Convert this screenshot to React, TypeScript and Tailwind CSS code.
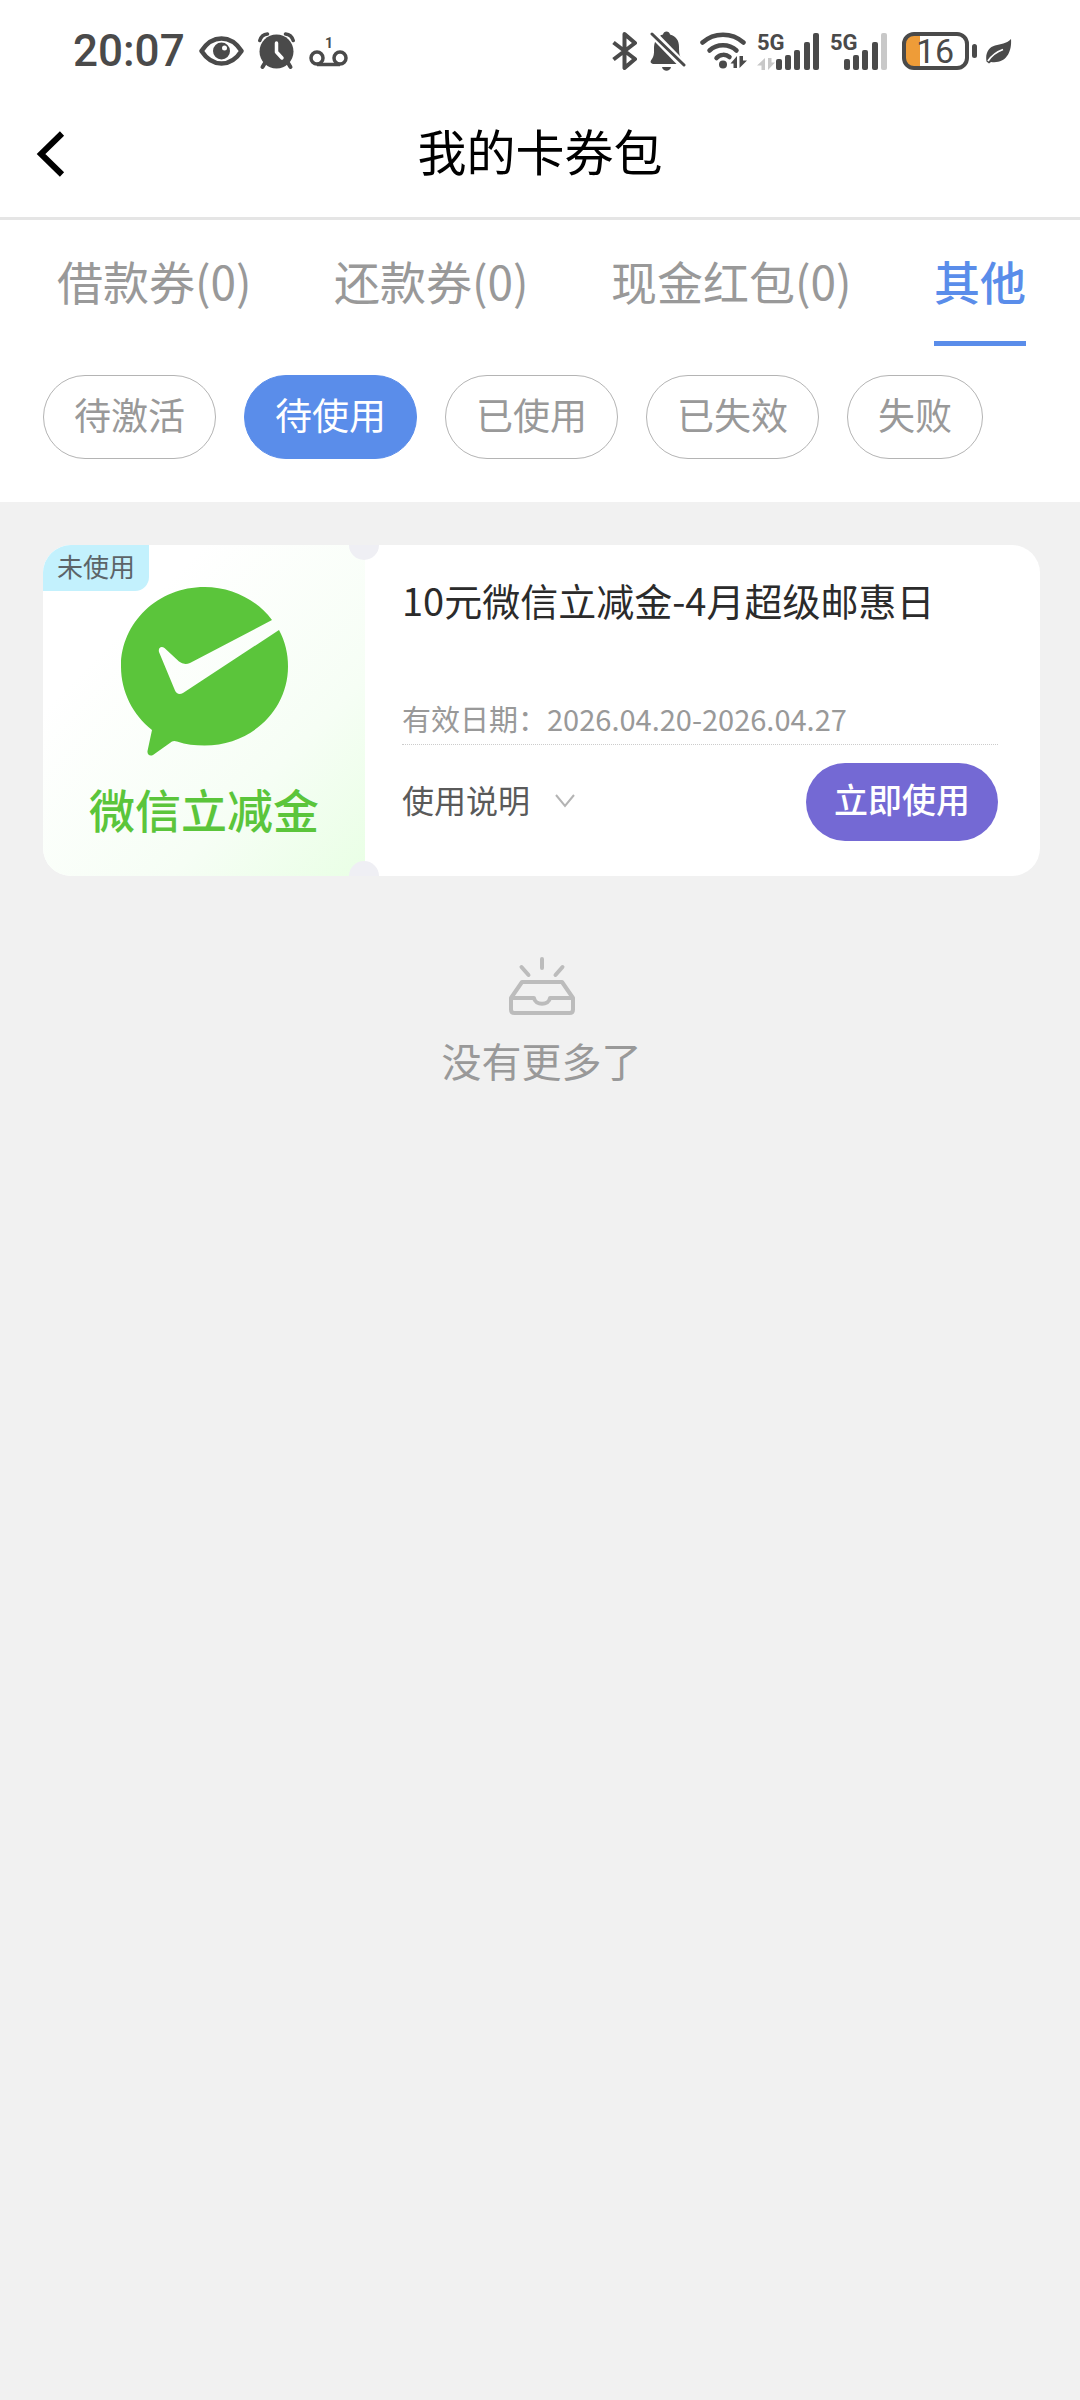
import React, { useState } from "react";

const INK = "#4a4a4a";

function EyeIcon() {
  return (
    <svg width="45" height="30" viewBox="0 0 45 30" aria-hidden="true">
      <path d="M2.500 15C8 6.500 14.500 2.500 22.500 2.500S37 6.500 42.500 15C37 23.500 30.500 27.500 22.500 27.500S8 23.500 2.500 15Z" fill="none" stroke={INK} strokeWidth="4.500" strokeLinejoin="round" />
      <circle cx="22.500" cy="15" r="8.500" fill={INK} />
      <circle cx="25.500" cy="12" r="2.500" fill="#fff" />
    </svg>
  );
}

function AlarmIcon() {
  return (
    <svg width="37" height="38" viewBox="0 0 37 38" aria-hidden="true">
      <g stroke={INK} strokeLinecap="round" fill="none">
        <path d="M1.800 8.500A9 9 0 0 1 9.500 2M35.200 8.500A9 9 0 0 0 27.500 2" strokeWidth="3.500" />
        <path d="M7.500 30L4.500 35M29.500 30L32.500 35" strokeWidth="4" />
      </g>
      <circle cx="18.500" cy="19.500" r="17" fill={INK} />
      <path d="M18.500 11V20L24 26" fill="none" stroke="#fff" strokeWidth="3.500" strokeLinecap="round" strokeLinejoin="round" />
    </svg>
  );
}

function VoicemailIcon() {
  return (
    <svg width="39" height="34" viewBox="0 0 39 34" aria-hidden="true">
      <g fill="none" stroke={INK} strokeWidth="3.500">
        <circle cx="8" cy="24" r="6" />
        <circle cx="31" cy="24" r="6" />
        <path d="M8 30.500H31" />
      </g>
      <text x="20" y="14" textAnchor="middle" fill={INK} fontSize="14" fontWeight="700" fontFamily="Roboto, sans-serif">1</text>
    </svg>
  );
}

function BluetoothIcon() {
  return (
    <svg width="26" height="38" viewBox="0 0 26 38" aria-hidden="true">
      <path d="M1.500 10.500L23 27L12.500 36V2L23 11L1.500 27.500" fill="none" stroke={INK} strokeWidth="4" strokeLinejoin="round" />
    </svg>
  );
}

function MutedBellIcon() {
  return (
    <svg width="36" height="40" viewBox="0 0 36 40" aria-hidden="true">
      <path d="M3 33C0 32 0 30.500 2 28C4.500 25 4 20 4 16C4.500 9 8.500 4.500 13 3.500C13.500 -0.500 19.500 -0.500 20 3.500C26 5 29 9.500 29 16C29 22 29.500 25 31.500 28C33 30.500 32 33 30 33Z" fill={INK} />
      <path d="M12 36H21C20 41 13 41 12 36Z" fill={INK} />
      <path d="M0 0L34 35" stroke="#fff" strokeWidth="8" />
      <path d="M2 3L34 34" stroke={INK} strokeWidth="3" strokeLinecap="round" />
    </svg>
  );
}

function WifiIcon() {
  return (
    <svg width="47" height="38" viewBox="0 0 47 38" aria-hidden="true">
      <g fill="none" stroke={INK} strokeWidth="4.500" strokeLinecap="round">
        <path d="M2.500 10.500C14 0 32 0 43.500 10.500" />
        <path d="M9.500 18.500C17 11.500 29 11.500 36.500 18.500" />
        <path d="M16.500 26C20 22 26 22 29.500 25" />
      </g>
      <circle cx="23" cy="32.500" r="4" fill={INK} />
      <path d="M37 24V36H33.500V31.500H30.500ZM39.500 24V36L47 28.500H43V24Z" fill={INK} />
    </svg>
  );
}

function SignalIcon({ labelX, weakLast, idle }: { labelX: number; weakLast?: boolean; idle?: boolean }) {
  const bars = [
    [19, 27],
    [28, 23],
    [37, 18],
    [47, 10],
    [56, 1],
  ];
  return (
    <svg width="63" height="55" viewBox="0 -8 63 55" aria-hidden="true">
      <text x={labelX} y="18" fill={INK} fontSize="22" fontWeight="700" fontFamily="Roboto, sans-serif">5G</text>
      {idle && <path d="M8 26V38H4.500V33.500H0ZM11 26V38L18 30.500H14.500V26Z" fill="#c8c8c8" />}
      {bars.map(([x, y], i) => (
        <rect key={x} x={x} y={y} width="6" height={38 - y} rx="2" fill={weakLast && i === 4 ? "#c8c8c8" : INK} />
      ))}
    </svg>
  );
}

function BatteryIcon() {
  return (
    <svg width="76" height="38" viewBox="0 0 76 38" aria-label="16%">
      <path d="M18 3H11A8 8 0 0 0 3 11V27A8 8 0 0 0 11 35H18Z" fill="#ee9c38" />
      <rect x="2" y="2" width="63" height="34" rx="10" fill="none" stroke={INK} strokeWidth="4" />
      <rect x="70" y="12" width="5" height="14" rx="2.500" fill={INK} />
      <text x="33" y="31" textAnchor="middle" fill={INK} fontSize="34" fontFamily="Roboto, sans-serif">16</text>
    </svg>
  );
}

function LeafIcon() {
  return (
    <svg width="26" height="25" viewBox="0 0 26 25" aria-hidden="true">
      <path d="M25 0C26 13 20 25 5 23L3 24.500L0.500 22.500C-1 14 3 8 9 6.500C15 5 20 5 25 0Z" fill={INK} />
      <path d="M2 22C6 16 10 13 17 10.500" fill="none" stroke="#fff" strokeWidth="1.800" />
    </svg>
  );
}

function StatusBar() {
  return (
    <div className="flex h-[102px] items-center justify-between bg-white pr-[68px] pl-[73px]">
      <div className="flex items-center">
        <span className="font-[Roboto,sans-serif] text-[44px] leading-[50px] font-medium text-[#4a4a4a]">20:07</span>
        <div className="ml-[14px] flex items-center gap-[14px]">
          <EyeIcon />
          <AlarmIcon />
          <VoicemailIcon />
        </div>
      </div>
      <div className="flex items-center">
        <BluetoothIcon />
        <div className="ml-3 flex items-center gap-[14px]">
          <MutedBellIcon />
          <WifiIcon />
        </div>
        <div className="ml-[10px] flex items-center gap-[5px]">
          <SignalIcon labelX={0} idle />
          <SignalIcon labelX={5} weakLast />
        </div>
        <div className="ml-[14px] flex items-center gap-2">
          <BatteryIcon />
          <LeafIcon />
        </div>
      </div>
    </div>
  );
}

function Header() {
  return (
    <header className="grid h-[118px] grid-cols-[1fr_auto_1fr] items-center border-b-[3px] border-[#e5e5e5] bg-white px-[36px] pb-[15px]">
      <button type="button" aria-label="返回" className="justify-self-start pt-1">
        <svg width="30" height="46" viewBox="0 0 30 46" aria-hidden="true">
          <path d="M26 2.500L5 23L26 43.500" fill="none" stroke="#000" strokeWidth="6" />
        </svg>
      </button>
      <h1 className="pb-1 text-[49px] leading-[60px] text-black">我的卡券包</h1>
    </header>
  );
}

const TABS = ["借款券(0)", "还款券(0)", "现金红包(0)", "其他"];
const FILTERS = ["待激活", "待使用", "已使用", "已失效", "失败"];

function Filters() {
  const [tab, setTab] = useState("其他");
  const [filter, setFilter] = useState("待使用");
  return (
    <section className="bg-white pt-[30px] pb-[43px]">
      <nav className="flex justify-between pr-[54px] pl-[57px] text-[46px] leading-[60px]">
        {TABS.map((t) => (
          <button
            key={t}
            type="button"
            onClick={() => setTab(t)}
            className={
              t === tab
                ? "border-b-[5px] border-[#5a8dea] pb-[31px] font-medium whitespace-nowrap text-[#5a8dea]"
                : "border-b-[5px] border-transparent pb-[31px] whitespace-nowrap text-[#999]"
            }
          >
            {t}
          </button>
        ))}
      </nav>
      <div className="mt-[29px] flex gap-[28px] px-[43px] text-[37px] leading-[50px]">
        {FILTERS.map((f) => (
          <button
            key={f}
            type="button"
            onClick={() => setFilter(f)}
            className={
              f === filter
                ? "h-[84px] rounded-full border border-[#5a8dea] bg-[#5a8dea] px-[30px] pb-[6px] whitespace-nowrap text-white"
                : "h-[84px] rounded-full border border-[#b4b4b4] px-[30px] pb-[6px] whitespace-nowrap text-[#999]"
            }
          >
            {f}
          </button>
        ))}
      </div>
    </section>
  );
}

function WeChatPayLogo() {
  return (
    <svg width="167" height="169" viewBox="0 0 167 169" aria-hidden="true">
      <path
        d="M151 33C136 13 111 0 83.500 0C37 0 0 35.500 0 79.500C0 105 12 128 31 143L26.500 164C26 168 29 169.500 32 168L51 154.500Q53 153.500 56 154.500C65 157.500 74 158.500 83.500 158.500C130 158.500 167 123.500 167 79.500C167 66.500 164 54 158 43L62 106C58.500 108 55.500 107 54 103.500L38 65C37 61 40 58.500 43.500 61L58 74.500Q63 78.500 69 76Z"
        fill="#5bc53b"
      />
    </svg>
  );
}

function CouponCard() {
  const [open, setOpen] = useState(false);
  return (
    <article className="relative flex min-h-[331px] overflow-hidden rounded-[28px] bg-white">
      <div className="relative flex w-[322px] shrink-0 flex-col items-center rounded-r-[14px] bg-linear-to-br from-white from-25% via-[#f6fef5] via-70% to-[#e9ffe5] pt-[42px]">
        <span className="absolute top-0 left-0 h-[46px] rounded-br-[14px] bg-[#c3f1fd] px-[14px] text-[26px] leading-[42px] text-[#5c6468]">未使用</span>
        <WeChatPayLogo />
        <p className="mt-[24px] text-[46px] leading-[56px] font-medium text-[#5bc53b]">微信立减金</p>
      </div>
      <span className="absolute -top-[15px] left-[306px] size-[30px] rounded-full bg-[#efeff4]" />
      <span className="absolute -bottom-[15px] left-[306px] size-[30px] rounded-full bg-[#efeff4]" />
      <div className="flex min-w-0 flex-1 flex-col pt-[30px] pr-[42px] pb-[35px] pl-[37px]">
        <h2 className="text-[38px] leading-[50px] whitespace-nowrap text-[#2b2b2b]">10元微信立减金-4月超级邮惠日</h2>
        <p className="mt-[73px] border-b border-dotted border-[#ccc] pb-[6px] text-[29px] leading-[40px] whitespace-nowrap text-[#999]">有效日期：2026.04.20-2026.04.27</p>
        <div className="mt-[18px] flex items-center justify-between">
          <button type="button" aria-expanded={open} onClick={() => setOpen(!open)} className="flex items-center gap-[25px] pb-[6px] text-[32px] leading-[40px] text-[#5a5a5a]">
            使用说明
            <svg className="mt-1" width="20" height="14" viewBox="0 0 20 14" aria-hidden="true">
              <path d="M1 1L10 12L19 1" fill="none" stroke="#b4b4b4" strokeWidth="2" />
            </svg>
          </button>
          <button type="button" className="h-[78px] rounded-full bg-[#7469d4] px-[28px] pb-[6px] text-[34px] leading-[40px] font-medium text-white">立即使用</button>
        </div>
      </div>
    </article>
  );
}

function EndOfList() {
  return (
    <div className="mt-[80px] flex flex-col items-center">
      <svg width="68" height="60" viewBox="0 0 68 60" fill="none" stroke="#bcbcbc" strokeWidth="4" strokeLinecap="round" strokeLinejoin="round" aria-hidden="true">
        <path d="M34 3V12M13.500 11L20.500 19M54.500 11L47.500 19" />
        <path d="M3 42L14 26H54L65 42V53.500Q65 57 61.500 57H6.500Q3 57 3 53.500ZM3 42H26C27 49.500 41 49.500 42 42H65" />
      </svg>
      <p className="mt-[14px] text-[40px] leading-[60px] text-[#999]">没有更多了</p>
    </div>
  );
}

export default function App() {
  return (
    <div className="min-h-screen bg-[#f1f1f1] font-['Noto_Sans_CJK_SC',sans-serif]">
      <StatusBar />
      <Header />
      <Filters />
      <main className="pt-[43px] pr-[40px] pl-[43px]">
        <CouponCard />
        <EndOfList />
      </main>
    </div>
  );
}
